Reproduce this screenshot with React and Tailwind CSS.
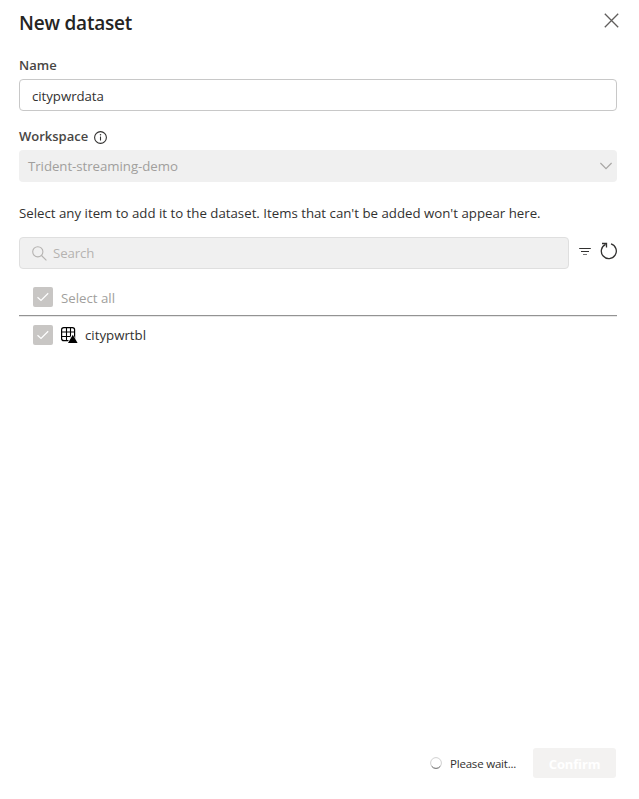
import React from "react";

function CheckedBox() {
  return (
    <span className="flex h-5 w-5 shrink-0 items-center justify-center rounded-[2px] bg-[#c8c6c4]">
      <svg width="20" height="20" viewBox="0 0 20 20" fill="none" stroke="#fff" strokeWidth="1.2">
        <path d="M4.5 10.2 8 13.4 15.2 6.3" />
      </svg>
    </span>
  );
}

function TableIcon() {
  return (
    <svg width="17" height="17" viewBox="0 0 17 17" fill="none" className="shrink-0">
      <rect x="0.6" y="0.6" width="13" height="13" rx="2.2" fill="#fff" stroke="#000" strokeWidth="1.2" />
      <path d="M5.5 1v13M9.5 1v13M1 5h13M1 9.5h13" stroke="#000" strokeWidth="1.1" />
      <path d="M11.5 6 17 17H5.6z" fill="#fff" />
      <path d="M11.8 7.8 16.6 16H7z" fill="#000" />
    </svg>
  );
}

export default function App() {
  return (
    <div className="flex h-[799px] w-[639px] flex-col bg-white pl-[19px] font-['Open_Sans','Noto_Sans',sans-serif] text-[13.25px] text-[#323130]">
      <header className="flex h-[46px] items-center justify-between pr-5">
        <h1 className="text-[19px] font-semibold tracking-[-0.2px] text-[#252423]">New dataset</h1>
        <svg width="15" height="15" viewBox="0 0 15 15" className="mb-[6px]" fill="none" stroke="#605e5c" strokeWidth="1.3">
          <path d="m.8.8 13.4 13.4M14.2.8.8 14.2" />
        </svg>
      </header>
      <main className="flex w-[598px] flex-1 flex-col">
        <label className="mt-[9px] h-5 text-[13px] leading-5 font-semibold text-[#484644]">Name</label>
        <div className="mt-1 flex h-8 items-center rounded border border-[#c8c8c8] pt-[3px] pl-3">
          <span className="tracking-[-0.05px]">citypwrdata</span>
        </div>
        <div className="mt-[15px] flex h-5 items-center gap-[6px]">
          <label className="pt-px text-[13px] font-semibold text-[#484644]">Workspace</label>
          <svg width="13" height="13" viewBox="0 0 13 13" fill="none" className="mt-[2px]">
            <circle cx="6.5" cy="6.5" r="5.9" stroke="#323130" strokeWidth="1.1" />
            <path d="M6.5 5.5v4" stroke="#323130" strokeWidth="1.1" />
            <circle cx="6.5" cy="3.8" r=".75" fill="#323130" />
          </svg>
        </div>
        <div className="mt-1 flex h-8 items-center justify-between rounded bg-[#f0f0f0] pr-[5px] pl-[9px] text-[#a19f9d]">
          <span className="pt-[2px] tracking-[-0.05px]">Trident-streaming-demo</span>
          <svg width="12" height="8" viewBox="0 0 12 8" fill="none" stroke="#a8a6a4" strokeWidth="1.2">
            <path d="m.4 1 5.6 5.6L11.6 1" />
          </svg>
        </div>
        <p className="mt-[21px] h-5 leading-5 whitespace-nowrap">
          Select any item to add it to the dataset. Items that can't be added won't appear here.
        </p>
        <div className="mt-[14px] flex h-8 items-center">
          <div className="flex h-8 w-[550px] shrink-0 items-center rounded border border-[#dfdfdf] bg-[#f0f0f0] pl-3 text-[#b5b3b1]">
            <svg width="15" height="15" viewBox="0 0 15 15" fill="none" stroke="#b5b3b1" strokeWidth="1.1">
              <circle cx="5.8" cy="5.8" r="5.1" />
              <path d="m9.5 9.5 4.9 4.9" />
            </svg>
            <span className="ml-[6px] pt-px tracking-[-0.1px]">Search</span>
          </div>
          <svg width="12" height="9" viewBox="0 0 12 9" className="mb-[4px] ml-[10px] shrink-0" fill="none" stroke="#323130" strokeWidth="1">
            <path d="M.2 1.5h11.6M2 4.5h8" />
            <path d="M4 7.5h4" stroke="#777" />
          </svg>
          <svg width="18" height="18" viewBox="0 0 18 18" className="mb-[4px] ml-[9px] shrink-0" fill="none" stroke="#323130" strokeWidth="1.3">
            <path d="M11 1.9A7.5 7.5 0 1 1 5.6 2.3" />
            <path d="M2 1.5H6.5V5.4" />
          </svg>
        </div>
        <div className="mt-[18px] flex h-[28px] items-start pl-[14px] text-[#a19f9d]">
          <CheckedBox />
          <span className="ml-2 leading-[22px]">Select all</span>
        </div>
        <hr className="h-[2px] border-t border-b border-t-[#939393] border-b-[#e8e8e8]" />
        <div className="mt-2 flex h-5 items-center pl-[14px]">
          <CheckedBox />
          <span className="ml-2 flex"><TableIcon /></span>
          <span className="ml-[7px] pt-[2px]">citypwrtbl</span>
        </div>
      </main>
      <footer className="mb-[21px] flex h-[30px] items-center justify-end pr-[23px]">
        <svg width="12" height="12" viewBox="0 0 12 12" fill="none">
          <circle cx="6" cy="6" r="5.4" stroke="#d0d0d0" />
          <path d="M1.7 9.3A5.4 5.4 0 0 0 10.3 9.3" stroke="#777" />
        </svg>
        <span className="ml-2 w-[67px] pt-[2px] text-[11.5px] tracking-[-0.2px] whitespace-nowrap">Please wait...</span>
        <button className="ml-4 h-[30px] w-[83px] rounded-[3px] bg-[#f3f2f1] pt-[3px] text-[13px] font-bold tracking-[-0.15px] text-white">Confirm</button>
      </footer>
    </div>
  );
}
